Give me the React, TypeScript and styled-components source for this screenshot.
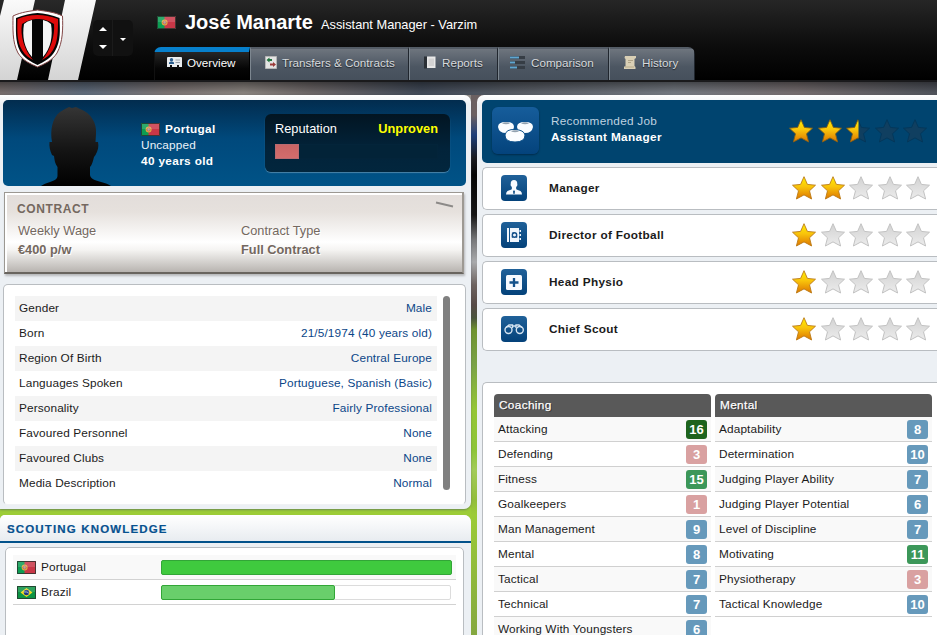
import React from "react";
import styled, { createGlobalStyle, css } from "styled-components";

const GlobalStyle = createGlobalStyle`
  * { box-sizing: border-box; }
  body { margin: 0; overflow: hidden; font-family: "Liberation Sans", Arial, sans-serif; font-size: 11.8px; letter-spacing: 0.13px; color: #1b1b1b; }
  svg { display: block; flex: none; }
`;

const Page = styled.div`
  width: 937px;
  height: 635px;
  overflow: hidden;
  display: flex;
  flex-direction: column;
  background: linear-gradient(180deg, #6b6061 0 110px, #6b6061 115px, #1d3f7a 135px, #191a1e 158px, #050505 175px, #151515 215px, #77787a 240px, #a9aaac 262px, #6d6360 285px, #574a46 305px, #4a543c 318px, #6f932e 330px, #7aa246 365px, #95c636 410px, #8dc538 450px, #a2cb58 470px, #92bd3b 500px, #9bcb38 515px, #84a740 635px);
`;

const Header = styled.header`
  height: 80px;
  flex: none;
  display: flex;
  background: linear-gradient(180deg, #262626, #0d0d0d 56%, #000);
`;
const HeaderMain = styled.div`
  display: flex;
  flex-direction: column;
  justify-content: space-between;
  margin-left: 20px;
`;
const Stepper = styled.div`
  margin: 20px 0 0 -3px;
  width: 40px;
  height: 36px;
  border-radius: 5px;
  background: #111;
  display: flex;
`;
const StepCell = styled.div`
  width: 19px;
  display: flex;
  flex-direction: column;
  align-items: center;
  justify-content: center;
  gap: 14px;
  padding-bottom: 1px;
  & + & { width: 21px; border-left: 1px solid #1b1b1b; padding: 3px 0 0; }
`;
const Arrow = styled.i<{ $up?: boolean; $small?: boolean }>`
  width: 0;
  height: 0;
  border: ${p => (p.$small ? 3 : 4)}px solid transparent;
  ${p => p.$up
    ? css`border-top: 0; border-bottom-color: #fff;`
    : css`border-bottom: 0; border-top-color: #fff;`}
`;
const TitleRow = styled.div`
  display: flex;
  align-items: center;
  height: 44px;
  padding-left: 4px;
  color: #fff;
`;
const Name = styled.h1`
  margin: 0 0 0 9px;
  width: 136px;
  font-size: 20px;
  letter-spacing: 0;
  white-space: nowrap;
`;
const Role = styled.span`
  margin-top: 5px;
  font-size: 12.8px;
  letter-spacing: 0;
`;
const Tabs = styled.nav`
  display: flex;
  height: 33px;
  margin-left: 1px;
  border-radius: 7px 7px 0 0;
  overflow: hidden;
`;
const Tab = styled.div<{ $w: number; $pad: number; $gap: number; $active?: boolean }>`
  width: ${p => p.$w}px;
  display: flex;
  align-items: center;
  gap: ${p => p.$gap}px;
  padding: 0 0 ${p => (p.$active ? 7 : 4)}px ${p => p.$pad}px;
  white-space: nowrap;
  font-size: 11.65px;
  letter-spacing: 0;
  color: ${p => (p.$active ? "#fff" : "#d7dadd")};
  text-shadow: 0 1px 1px #0009;
  border-top: ${p => (p.$active ? "5px solid #0780cc" : "2px solid #545c66")};
  border-left: 1px solid ${p => (p.$active ? "#111" : "#7d8790")};
  border-right: 1px solid ${p => (p.$active ? "#000" : "#20262e")};
  background: ${p => (p.$active ? "linear-gradient(#262626,#050505 60%,#000)" : "linear-gradient(#6e757e,#4c5662 58%,#46505c)")};
`;

const Band = styled.div`
  height: 15px;
  flex: none;
  border-top: 2px solid #1a1a1c;
  background: linear-gradient(180deg, #0006, transparent 80%),
    linear-gradient(90deg, #756b6a, #5c6878 9%, #787070 18%, #86807c 26%, #6b6566 33%, #3f4856 45%, #565b63 56%, #71767e 72%, #726a6c 85%, #4e525a);
`;
const Columns = styled.main`
  display: flex;
  gap: 6px;
  height: 540px;
`;
const Left = styled.div`
  width: 471px;
  flex: none;
  display: flex;
  flex-direction: column;
  gap: 6px;
  background: linear-gradient(#8f8a86 0 320px, #9ccc37 400px);
`;
const Panel = styled.section`
  background: linear-gradient(#fff, #ecf0f4 10px);
`;
const ProfilePanel = styled(Panel)`
  height: 414px;
  padding: 5px 5px 4px 3px;
  border-radius: 0 7px 7px 0;
  box-shadow: 0 1px 2px #4568;
`;
const PlayerCard = styled.div`
  height: 86px;
  border-radius: 5px;
  display: flex;
  background: linear-gradient(#022c4e, #00497c 45%, #005387);
`;
const Silhouette = styled.div`
  width: 138px;
  padding: 6px 0 0 37px;
`;
const PlayerFacts = styled.div`
  width: 124px;
  padding-top: 21px;
  color: #e9f2fa;
  line-height: 16px;
`;
const Strong = styled.b`
  letter-spacing: 0.35px;
  color: #fff;
`;
const FlagLine = styled.div`
  display: flex;
  align-items: center;
  gap: 5px;
`;
const Reputation = styled.div`
  width: 185px;
  height: 58px;
  margin-top: 14px;
  padding: 7px 12px 0 10px;
  border-radius: 6px;
  background: linear-gradient(#021522, #02233a 60%, #02263d);
  box-shadow: 0 1px 1px #4a83a8;
  color: #fff;
  font-size: 12.8px;
  letter-spacing: 0;
  line-height: 16px;
`;
const Spread = styled.div`
  display: flex;
  justify-content: space-between;
`;
const Yellow = styled.b`
  color: #ff0;
`;
const RepBar = styled.div`
  margin-top: 7px;
  height: 15px;
  border: 1px solid #03243a;
  background: #022338;
`;
const RepFill = styled.div`
  width: 24px;
  height: 15px;
  margin: -1px;
  background: linear-gradient(#c96565, #d36c6c);
  border: 1px solid #b96a70;
`;

const Contract = styled.div`
  margin: 6px 2px 0 1px;
  height: 82px;
  padding: 8px 8px 0 12px;
  border: 1px solid #9b9892;
  border-bottom: 2px solid #69655f;
  border-right: 2px solid #9d9993;
  background: linear-gradient(#e2ddda, #e6e1dd 24%, #fff 62%, #f5f4f2 72%, #b8b4b0);
  box-shadow: inset 2px 2px #fff, 1px 2px 2px #8888;
  color: #74685f;
  font-size: 12.8px;
  letter-spacing: 0;
`;
const ContractTitle = styled.div`
  display: flex;
  justify-content: space-between;
  font-weight: bold;
  letter-spacing: 0.6px;
  font-size: 12px;
  line-height: 17px;
`;
const ContractGrid = styled.div`
  display: grid;
  grid-template-columns: 223px 1fr;
  padding-left: 1px;
  line-height: 19px;
  margin-top: 3px;
  text-shadow: 1px 1px #fff;
`;

const InfoBox = styled.div`
  margin-top: 10px;
  height: 221px;
  padding: 11px 14px 0 11px;
  border: 1px solid #b9bdc1;
  border-bottom-color: #f0f2f4;
  border-radius: 5px;
  background: #fff;
  display: flex;
  gap: 6px;
`;
const InfoRows = styled.div`
  width: 422px;
`;
const InfoRow = styled.div`
  height: 25px;
  padding: 0 5px 0 4px;
  display: flex;
  justify-content: space-between;
  line-height: 25px;
  &:nth-child(odd) { background: #f4f4f4; }
`;
const Value = styled.span`
  color: #0b4688;
`;
const Scrollbar = styled.div`
  width: 7px;
  height: 194px;
  border-radius: 4px;
  background: #808080;
`;

const ScoutPanel = styled(Panel)`
  height: 130px;
  border-radius: 5px 7px 0 0;
  background: #ecf0f4;
  overflow: hidden;
`;
const ScoutTitle = styled.h2`
  margin: 0;
  height: 28px;
  padding-left: 7px;
  border-bottom: 2px solid #02528b;
  background: linear-gradient(#fff, #e8ecf0);
  color: #07518f;
  font-size: 11.5px;
  letter-spacing: 1.15px;
  line-height: 29px;
  -webkit-text-stroke: 0.2px #07518f;
`;
const ScoutBox = styled.div`
  margin: 4px 7px 0 5px;
  height: 100px;
  padding: 7px 7px;
  border: 1px solid #b9bdc1;
  border-radius: 5px;
  background: #fff;
`;
const ScoutRow = styled.div`
  display: flex;
  align-items: center;
  height: 25px;
  padding-left: 4px;
  border-bottom: 1px solid #d2d2d2;
  &:first-child { background: #f9f9f9; }
`;
const Country = styled.span`
  width: 125px;
  padding-left: 5px;
`;
const Track = styled.div`
  width: 290px;
  height: 15px;
  border: 1px solid #dcdcdc;
  border-radius: 2px;
  background: #fff;
`;
const Fill = styled.div<{ $w: number; $c: string }>`
  width: ${p => p.$w}px;
  height: 15px;
  margin: -1px;
  border-radius: 2px;
  border: 1px solid #32a637;
  background: ${p => p.$c};
`;

const Right = styled.section`
  width: 460px;
  flex: none;
  overflow: hidden;
  padding: 5px 0 0 5px;
  border-radius: 7px 0 0 0;
  background: linear-gradient(#fff, #ecf0f4 10px);
`;
const Recommended = styled.div`
  height: 63px;
  display: flex;
  align-items: center;
  padding-left: 10px;
  border-radius: 5px 0 0 5px;
  background: #00446f;
`;
const BigIcon = styled.div`
  width: 47px;
  height: 47px;
  margin-bottom: 3px;
  border-radius: 6px;
  background: linear-gradient(#165d9b, #04437c);
  box-shadow: 0 1px 2px #002b4b;
`;
const RecText = styled.div`
  width: 250px;
  padding: 0 0 6px 12px;
  color: #bfd2e0;
  line-height: 16px;
  letter-spacing: 0.25px;
`;
const JobRow = styled.div`
  height: 43px;
  margin-top: 4px;
  display: flex;
  align-items: center;
  padding: 0 0 2px 18px;
  border: 1px solid #b9bdc1;
  border-right: 0;
  border-radius: 5px 0 0 5px;
  background: #fff;
`;
const JobIcon = styled.div`
  width: 26px;
  height: 26px;
  border-radius: 4px;
  background: linear-gradient(#206199, #04427a);
`;
const JobName = styled.b`
  width: 265px;
  padding-left: 22px;
  letter-spacing: 0.32px;
`;
const Stars = styled.div<{ $dark?: boolean }>`
  display: flex;
  gap: 4.5px;
  padding-bottom: ${p => (p.$dark ? 2 : 0)}px;
`;

const AttrBox = styled.div`
  margin-top: 31px;
  height: 270px;
  padding: 11px 4px 0 11px;
  display: flex;
  gap: 4px;
  border: 1px solid #b9bdc1;
  border-right: 0;
  border-radius: 5px 0 0 0;
  background: #fff;
`;
const AttrTable = styled.div`
  width: 217px;
`;
const AttrHead = styled.div`
  height: 23px;
  padding-left: 5px;
  border-radius: 4px 4px 0 0;
  background: #595959;
  color: #fff;
  text-shadow: 1px 1px #333;
  line-height: 23px;
  letter-spacing: 0.35px;
  -webkit-text-stroke: 0.25px #fff;
`;
const AttrRow = styled.div`
  height: 25px;
  padding: 0 4px;
  display: flex;
  justify-content: space-between;
  align-items: center;
  line-height: 24px;
  border-bottom: 1px solid #d0d0d0;
  &:nth-child(even) { background: #f9f9f9; }
`;
const Badge = styled.b<{ $v: number }>`
  width: 21px;
  height: 19px;
  border-radius: 3px;
  background: ${p => (p.$v > 15 ? "#1e641e" : p.$v > 10 ? "#3c9759" : p.$v > 5 ? "#6699bb" : "#d9a1a1")};
  color: #fff;
  font-size: 13px;
  letter-spacing: 0;
  line-height: 20px;
  text-align: center;
`;

const Crest = () => (
  <svg width="96" height="80" viewBox="0 0 96 80">
    <defs>
      <linearGradient id="stripe" x2="0" y2="1"><stop stopColor="#fafafa" /><stop offset="1" stopColor="#d4d4d4" /></linearGradient>
      <linearGradient id="dark" x2="0" y2="1"><stop stopColor="#292929" /><stop offset="1" stopColor="#000" /></linearGradient>
    </defs>
    <path d="M0 0H96L78 80H0Z" fill="url(#dark)" />
    <path d="M4 0H35L17 80H0V16ZM65 0H96L78 80H48Z" fill="url(#stripe)" />
    <path d="M37.500 10C31 11 21 12 13 16C13 28 12 42 18 53C23 61 31 64 37.500 67C44 64 52 61 57 53C63 42 63 28 62.500 16C55 12 44 11 37.500 10Z" fill="#fff" stroke="#834848" strokeWidth="1" />
    <path d="M37.500 13C31 13.500 24 15 16 18C16 30 15 41 20 51C24 58 31 62 37.500 65C44 62 51 58 55 51C61 41 60 30 59.500 18C52 15 44 13.500 37.500 13Z" fill="#050505" />
    <path d="M37.500 15C30 15 24 16.500 17.500 19C17 31 17 42 22 50C25 55 29 58 33 60C24 50 20 35 22 24C28 20 33 19 37.500 19C43 19 48 20 54 24C55 35 51 50 42 60C46 58 50 55 53 50C58 42 58 31 58 19C51 16.500 44 15 37.500 15Z" fill="#de0a0a" />
    <path d="M32 20Q27 21 24 24C22 36 24 48 32 57ZM43 20Q48 21 51 24C53 36 51 48 43 57Z" fill="#f5f5f5" />
  </svg>
);

const Flag = ({ kind = "pt" }: { kind?: "pt" | "br" }) => (
  <svg width="19" height="13" viewBox="0 0 19 13">
    {kind === "pt" ? (
      <>
        <path d="M0 0H8V13H0Z" fill="#0c9d53" />
        <path d="M7.500 0H19V13H7.500Z" fill="#c93747" />
        <circle cx="7.600" cy="6.500" r="3" fill="#dfaa45" />
        <circle cx="7.600" cy="6.500" r="1.600" fill="#b3a5a5" stroke="#c4513e" strokeWidth=".6" />
      </>
    ) : (
      <>
        <path d="M0 0H19V13H0Z" fill="#0c9344" />
        <path d="M9.500 2L15.500 6.500L9.500 11L3.500 6.500Z" fill="#f2da20" />
        <circle cx="9.500" cy="6.500" r="2.700" fill="#20377f" />
        <path d="M7 6Q9.500 5.500 12 7.300" stroke="#c8d7e8" strokeWidth=".7" fill="none" />
      </>
    )}
    <path d="M1 1H18V6H1Z" fill="#fff" opacity=".14" />
    <path d="M.5 .5H18.500V12.500H.5Z" fill="none" stroke="#28332d" strokeOpacity=".8" />
  </svg>
);

const STAR = "M12 .7L15.400 8.400L23.500 9.200L17.500 14.800L19.600 23L12 18.900L4.400 23L6.500 14.800L.5 9.200L8.600 8.400Z";

const Star = ({ fill, dark }: { fill: number; dark?: boolean }) => (
  <svg width="24" height="24" viewBox="0 0 24 24">
    <defs>
      <linearGradient id="gold" x2="0" y2="1"><stop stopColor="#fff000" /><stop offset=".45" stopColor="#f9c40b" /><stop offset="1" stopColor="#dd7500" /></linearGradient>
      <linearGradient id="silver" x2="0" y2="1"><stop stopColor="#d2d2d2" /><stop offset="1" stopColor="#ececec" /></linearGradient>
      <clipPath id="halfStar"><path d="M0 0H12.500V24H0Z" /></clipPath>
    </defs>
    {fill < 1 && <path d={STAR} fill={dark ? "#103f60" : "url(#silver)"} stroke={dark ? "#04385b" : "#c2c2c2"} />}
    {fill > 0 && <path d={STAR} fill="url(#gold)" stroke={dark ? "#866019" : "#bb7a16"} strokeWidth=".9" clipPath={fill < 1 ? "url(#halfStar)" : undefined} />}
  </svg>
);

const Rating = ({ value, dark }: { value: number; dark?: boolean }) => (
  <Stars $dark={dark}>
    {[0, 1, 2, 3, 4].map(i => <Star key={i} dark={dark} fill={Math.max(0, Math.min(1, value - i))} />)}
  </Stars>
);

const tabIcons: Record<string, React.ReactNode> = {
  overview: (
    <svg width="15" height="13" viewBox="0 0 15 13">
      <path d="M1 1H14Q15 1 15 2V11H0V2Q0 1 1 1Z" fill="#e9edf0" />
      <circle cx="4.500" cy="3.800" r="1.700" fill="#2a5d8e" /><path d="M2 8V6.500Q4.500 4.500 7 6.500V8Z" fill="#2a5d8e" />
      <path d="M8.500 4H13M8.500 6.500H13" stroke="#9aa2aa" /><path d="M3 9H5V12H3ZM10 9H12V12H10Z" fill="#111" />
    </svg>
  ),
  transfers: (
    <svg width="12" height="13" viewBox="0 0 12 13">
      <path d="M.5 .5H11.500V12.500H.5Z" fill="#e3e3e3" stroke="#b5b5b5" />
      <path d="M1.500 4L4.500 1.500V3H7V5H4.500V6.500Z" fill="#22743e" /><path d="M11 8.500L8 6V7.500H5V9.500H8V11Z" fill="#9b3b39" />
    </svg>
  ),
  reports: (
    <svg width="12" height="13" viewBox="0 0 12 13">
      <path d="M0 .5H3V12.500H0Z" fill="#2b3036" /><path d="M3 .5H11.500V12H3Z" fill="#e8e8e8" /><path d="M4.500 2.500H10V10H4.500Z" fill="#d3d3d3" />
    </svg>
  ),
  comparison: (
    <svg width="15" height="13" viewBox="0 0 15 13">
      <path d="M0 0H15V3H0ZM0 5H15V8H0ZM0 10H15V13H0Z" fill="#363d45" />
      <path d="M0 .5H9V2.500H0ZM0 5.500H5V7.500H0ZM0 10.500H7V12.500H0Z" fill="#5fa6d2" />
    </svg>
  ),
  history: (
    <svg width="12" height="13" viewBox="0 0 12 13">
      <path d="M1 0H12V2L10.500 3V10L11.500 11V13H0V10.500H1.500V3L.5 2Z" fill="#d9cfb5" />
      <path d="M4 4.500H9M4 6.500H7" stroke="#b0a488" /><path d="M1 11H10" stroke="#b7aa8a" />
    </svg>
  ),
};

const tabs = [
  { id: "overview", label: "Overview", w: 96, pad: 12, gap: 5 },
  { id: "transfers", label: "Transfers & Contracts", w: 159, pad: 14, gap: 5 },
  { id: "reports", label: "Reports", w: 89, pad: 14, gap: 6 },
  { id: "comparison", label: "Comparison", w: 111, pad: 11, gap: 6 },
  { id: "history", label: "History", w: 86, pad: 14, gap: 6 },
];

const jobs: { name: string; stars: number; icon: React.ReactNode }[] = [
  { name: "Manager", stars: 2, icon: <path d="M13 5C10.500 5 9.500 7 9.800 9C9.300 9.500 9.800 11 10.400 11.300L11 13L10.500 14.500L6.500 16Q5 17 5 19.500H21Q21 17 19.500 16L15.500 14.500L15 13L15.600 11.300C16.200 11 16.700 9.500 16.200 9C16.500 7 15.500 5 13 5ZM13 15L14 16.500L13.500 19H12.500L12 16.500Z" fill="#f7faff" fillRule="evenodd" /> },
  { name: "Director of Football", stars: 1, icon: <>
    <path d="M6 6H8V20H6ZM9 6H18V20H9ZM18.500 8H20V10H18.500ZM18.500 12H20V14H18.500ZM18.500 16H20V18H18.500Z" fill="#f1f6fc" />
    <circle cx="13.500" cy="13" r="2.200" fill="none" stroke="#155089" strokeWidth="1.400" /><path d="M11 15.500L12 14M16 15.500L15 14M11 11.500L13 11" stroke="#155089" strokeWidth="1.400" /></> },
  { name: "Head Physio", stars: 1, icon: <>
    <rect x="5" y="6" width="16" height="15" rx="1.500" fill="#f7faff" /><path d="M13 9V18M8.500 13.500H17.500" stroke="#13518b" strokeWidth="2.300" /></> },
  { name: "Chief Scout", stars: 1, icon: <g fill="none" stroke="#d4e3f1" strokeWidth="1.400">
    <circle cx="7.500" cy="14" r="3.500" /><circle cx="18.800" cy="14" r="3.500" />
    <path d="M5 11.500L8 9H11.500V12M21 11.500L18 9H15V12M11 10H15" /></g> },
];

const info = [
  ["Gender", "Male"],
  ["Born", "21/5/1974 (40 years old)"],
  ["Region Of Birth", "Central Europe"],
  ["Languages Spoken", "Portuguese, Spanish (Basic)"],
  ["Personality", "Fairly Professional"],
  ["Favoured Personnel", "None"],
  ["Favoured Clubs", "None"],
  ["Media Description", "Normal"],
];

const attributes: [string, [string, number][]][] = [
  ["Coaching", [["Attacking", 16], ["Defending", 3], ["Fitness", 15], ["Goalkeepers", 1], ["Man Management", 9], ["Mental", 8], ["Tactical", 7], ["Technical", 7], ["Working With Youngsters", 6]]],
  ["Mental", [["Adaptability", 8], ["Determination", 10], ["Judging Player Ability", 7], ["Judging Player Potential", 6], ["Level of Discipline", 7], ["Motivating", 11], ["Physiotherapy", 3], ["Tactical Knowledge", 10]]],
];

export default function App() {
  return (
    <>
      <GlobalStyle />
      <Page>
        <Header>
          <Crest />
          <Stepper>
            <StepCell><Arrow $up /><Arrow /></StepCell>
            <StepCell><Arrow $small /></StepCell>
          </Stepper>
          <HeaderMain>
            <TitleRow>
              <Flag />
              <Name>José Manarte</Name>
              <Role>Assistant Manager - Varzim</Role>
            </TitleRow>
            <Tabs>
              {tabs.map((t, i) => <Tab key={t.id} $w={t.w} $pad={t.pad} $gap={t.gap} $active={i === 0}>{tabIcons[t.id]}{t.label}</Tab>)}
            </Tabs>
          </HeaderMain>
        </Header>
        <Band />
        <Columns>
          <Left>
            <ProfilePanel>
              <PlayerCard>
                <Silhouette>
                  <svg width="74" height="80" viewBox="0 0 74 80">
                    <defs><linearGradient id="head" x2="0" y2="1"><stop stopColor="#353535" /><stop offset=".55" stopColor="#141414" /><stop offset="1" stopColor="#000" /></linearGradient></defs>
                    <path d="M1 80C8 75 18 76 17.500 69V61C15 58 14.500 54 14 50L12 49C10 45 9 40 9.500 36L12 36C10 25 12 12 20 6L25 3L29 1L32 2L36 1L40 3C51 7 57 17 56 28L55.500 36H58C59 40 58 45 55.500 49L54 51C53 55 52 59 50 61V69C51 76 65 75 71 80Z" fill="url(#head)" />
                  </svg>
                </Silhouette>
                <PlayerFacts>
                  <FlagLine><Flag /><Strong>Portugal</Strong></FlagLine>
                  <div>Uncapped</div>
                  <Strong>40 years old</Strong>
                </PlayerFacts>
                <Reputation>
                  <Spread><span>Reputation</span><Yellow>Unproven</Yellow></Spread>
                  <RepBar><RepFill /></RepBar>
                </Reputation>
              </PlayerCard>
              <Contract>
                <ContractTitle>
                  CONTRACT
                  <svg width="20" height="8" viewBox="0 0 20 8"><path d="M2 1.500L19 5.500" stroke="#8c8a88" strokeWidth="1.800" /></svg>
                </ContractTitle>
                <ContractGrid>
                  <span>Weekly Wage</span><span>Contract Type</span>
                  <b>€400 p/w</b><b>Full Contract</b>
                </ContractGrid>
              </Contract>
              <InfoBox>
                <InfoRows>
                  {info.map(([k, v]) => <InfoRow key={k}><span>{k}</span><Value>{v}</Value></InfoRow>)}
                </InfoRows>
                <Scrollbar />
              </InfoBox>
            </ProfilePanel>
            <ScoutPanel>
              <ScoutTitle>SCOUTING KNOWLEDGE</ScoutTitle>
              <ScoutBox>
                <ScoutRow><Flag /><Country>Portugal</Country><Track><Fill $w={291} $c="#3fca3e" /></Track></ScoutRow>
                <ScoutRow><Flag kind="br" /><Country>Brazil</Country><Track><Fill $w={174} $c="#69cf6b" /></Track></ScoutRow>
              </ScoutBox>
            </ScoutPanel>
          </Left>
          <Right>
            <Recommended>
              <BigIcon>
                <svg width="47" height="47" viewBox="0 0 47 47">
                  <g fill="#fbfdff">
                    <path d="M6 20Q6 15 14 15T22 20Q21 26 14 26T6 20ZM25 20Q25 15 33 15T41 20Q40 26 33 26T25 20Z" />
                    <path d="M13 28Q14 22 23 22.500T33 28Q33 35 23 35T13 28Z" stroke="#10528b" />
                  </g>
                  <path d="M10 16.500Q14 14 18 16.500Q14 18 10 16.500ZM29 16.500Q33 14 37 16.500Q33 18 29 16.500ZM19 24.500Q23 22 27 24.500Q23 26 19 24.500Z" fill="#93a2b0" />
                </svg>
              </BigIcon>
              <RecText><div>Recommended Job</div><Strong>Assistant Manager</Strong></RecText>
              <Rating value={2.5} dark />
            </Recommended>
            {jobs.map(j => (
              <JobRow key={j.name}>
                <JobIcon><svg width="26" height="26" viewBox="0 0 26 26">{j.icon}</svg></JobIcon>
                <JobName>{j.name}</JobName>
                <Rating value={j.stars} />
              </JobRow>
            ))}
            <AttrBox>
              {attributes.map(([title, rows]) => (
                <AttrTable key={title}>
                  <AttrHead>{title}</AttrHead>
                  {rows.map(([n, v]) => <AttrRow key={n}><span>{n}</span><Badge $v={v}>{v}</Badge></AttrRow>)}
                </AttrTable>
              ))}
            </AttrBox>
          </Right>
        </Columns>
      </Page>
    </>
  );
}
